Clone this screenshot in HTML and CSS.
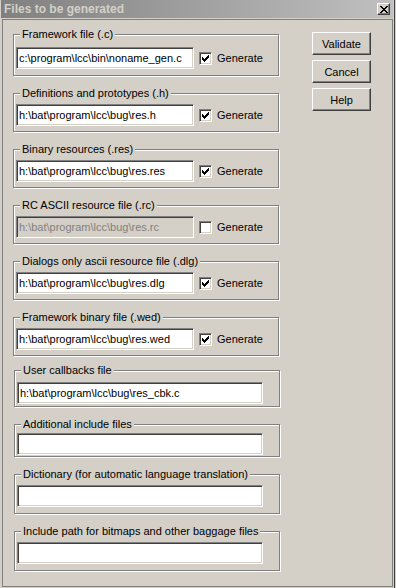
FILE: index.html
```html
<!DOCTYPE html>
<html lang="en">
<head>
  <meta charset="UTF-8" />
  <title>Files to be generated</title>
  <link rel="stylesheet" href="styles.css">
</head>
<body>
  <div class="window">
    <div class="titlebar">
      <span class="title">Files to be generated</span>
      <span class="close">
        <svg width="8" height="7" viewBox="0 0 8 7" shape-rendering="crispEdges">
          <path d="M0 0h2v1h1v1h2v-1h1v-1h2v1h-1v1h-1v1h-1v1h1v1h1v1h1v1h-2v-1h-1v-1h-2v1h-1v1h-2v-1h1v-1h1v-1h1v-1h-1v-1h-1v-1h-1z" fill="#000"/>
        </svg>
      </span>
    </div>

    <div class="client">
      <div class="groups">
        <fieldset class="group first">
          <legend>Framework file (.c)</legend>
          <div class="row">
            <input class="path" type="text" value="c:\program\lcc\bin\noname_gen.c" />
            <span class="check on"><svg width="7" height="7" viewBox="0 0 7 7" shape-rendering="crispEdges"><path d="M0 2h1v1h1v1h1v-1h1v-1h1v-1h1v-1h1v3h-1v1h-1v1h-1v1h-1v1h-1v-1h-1v-1h-1z"/></svg></span>
            <span class="check-label">Generate</span>
          </div>
        </fieldset>

        <fieldset class="group">
          <legend>Definitions and prototypes (.h)</legend>
          <div class="row">
            <input class="path" type="text" value="h:\bat\program\lcc\bug\res.h" />
            <span class="check on"><svg width="7" height="7" viewBox="0 0 7 7" shape-rendering="crispEdges"><path d="M0 2h1v1h1v1h1v-1h1v-1h1v-1h1v-1h1v3h-1v1h-1v1h-1v1h-1v1h-1v-1h-1v-1h-1z"/></svg></span>
            <span class="check-label">Generate</span>
          </div>
        </fieldset>

        <fieldset class="group">
          <legend>Binary resources (.res)</legend>
          <div class="row">
            <input class="path" type="text" value="h:\bat\program\lcc\bug\res.res" />
            <span class="check on"><svg width="7" height="7" viewBox="0 0 7 7" shape-rendering="crispEdges"><path d="M0 2h1v1h1v1h1v-1h1v-1h1v-1h1v-1h1v3h-1v1h-1v1h-1v1h-1v1h-1v-1h-1v-1h-1z"/></svg></span>
            <span class="check-label">Generate</span>
          </div>
        </fieldset>

        <fieldset class="group">
          <legend>RC ASCII resource file (.rc)</legend>
          <div class="row">
            <input class="path" type="text" value="h:\bat\program\lcc\bug\res.rc" disabled />
            <span class="check"></span>
            <span class="check-label">Generate</span>
          </div>
        </fieldset>

        <fieldset class="group">
          <legend>Dialogs only ascii resource file (.dlg)</legend>
          <div class="row">
            <input class="path" type="text" value="h:\bat\program\lcc\bug\res.dlg" />
            <span class="check on"><svg width="7" height="7" viewBox="0 0 7 7" shape-rendering="crispEdges"><path d="M0 2h1v1h1v1h1v-1h1v-1h1v-1h1v-1h1v3h-1v1h-1v1h-1v1h-1v1h-1v-1h-1v-1h-1z"/></svg></span>
            <span class="check-label">Generate</span>
          </div>
        </fieldset>

        <fieldset class="group">
          <legend>Framework binary file (.wed)</legend>
          <div class="row">
            <input class="path" type="text" value="h:\bat\program\lcc\bug\res.wed" />
            <span class="check on"><svg width="7" height="7" viewBox="0 0 7 7" shape-rendering="crispEdges"><path d="M0 2h1v1h1v1h1v-1h1v-1h1v-1h1v-1h1v3h-1v1h-1v1h-1v1h-1v1h-1v-1h-1v-1h-1z"/></svg></span>
            <span class="check-label">Generate</span>
          </div>
        </fieldset>

        <fieldset class="group wide callbacks">
          <legend>User callbacks file</legend>
          <input class="path long" type="text" value="h:\bat\program\lcc\bug\res_cbk.c" />
        </fieldset>

        <fieldset class="group wide includes">
          <legend>Additional include files</legend>
          <input class="path long" type="text" value="" />
        </fieldset>

        <fieldset class="group wide">
          <legend>Dictionary (for automatic language translation)</legend>
          <input class="path long" type="text" value="" />
        </fieldset>

        <fieldset class="group wide">
          <legend>Include path for bitmaps and other baggage files</legend>
          <input class="path long" type="text" value="" />
        </fieldset>
      </div>

      <div class="buttons">
        <button type="button">Validate</button>
        <button type="button">Cancel</button>
        <button type="button">Help</button>
      </div>
    </div>
  </div>
</body>
</html>
```

FILE: styles.css
```css
body {
  margin: 0;
  background: #d4d0c8;
  font-family: "Liberation Sans", Arial, sans-serif;
  font-size: 11px;
  color: #000;
}

.window {
  width: 395px;
  height: 588px;
  box-sizing: border-box;
  display: flex;
  flex-direction: column;
  background: #d4d0c8;
  padding: 0 1px 1px 1px;
  border-right: 1px solid #404040;
}

.titlebar {
  height: 18px;
  display: flex;
  align-items: center;
  justify-content: space-between;
  padding: 0 3px 0 3px;
  background: linear-gradient(to right, #808080, #c0c0c0);
}

.title {
  font-size: 12px;
  font-weight: bold;
  color: #d4d0c8;
}

.close {
  width: 13px;
  height: 12px;
  box-sizing: border-box;
  display: flex;
  align-items: center;
  justify-content: center;
  background: #d4d0c8;
  border: 1px solid;
  border-color: #fff #404040 #404040 #fff;
  box-shadow: inset -1px -1px 0 #808080;
}

.client {
  flex: 1;
  display: flex;
  margin: 1px 0 0 1px;
  padding: 8px 0 0 10px;
  border: 1px solid #808080;
}

.groups {
  width: 268px;
  display: flex;
  flex-direction: column;
  gap: 11px;
}

.group {
  margin: 0;
  min-inline-size: 0;
  width: 266px;
  box-sizing: border-box;
  padding: 4px 2px 5px 2px;
  border: 1px solid #808080;
  box-shadow: inset 1px 1px 0 #fff, 1px 1px 0 #fff;
}

.group legend {
  margin-left: 4px;
  padding: 0 2px;
  line-height: 13px;
  background: #d4d0c8;
}

.group.first {
  padding-top: 6px;
  padding-bottom: 6px;
}

.group.wide {
  margin-left: 1px;
  padding-bottom: 6px;
}

.group.callbacks {
  margin-top: -3px;
  padding-top: 5px;
  padding-bottom: 2px;
}

.group.includes {
  padding-top: 2px;
  padding-bottom: 1px;
}

.row {
  display: flex;
  align-items: center;
}

.path {
  width: 178px;
  height: 22px;
  box-sizing: border-box;
  margin: 0;
  padding: 0 2px;
  font-family: inherit;
  font-size: 11px;
  color: #000;
  background: #fff;
  border: 1px solid;
  border-color: #808080 #fff #fff #808080;
  box-shadow: inset 1px 1px 0 #404040, inset -1px -1px 0 #d4d0c8;
  outline: none;
}

.path.long {
  width: 246px;
}

.path:disabled {
  color: #808080;
  background: #d4d0c8;
}

.check {
  width: 13px;
  height: 13px;
  box-sizing: border-box;
  margin-left: 5px;
  background: #fff;
  border: 1px solid;
  border-color: #808080 #fff #fff #808080;
  box-shadow: inset 1px 1px 0 #404040, inset -1px -1px 0 #d4d0c8;
}

.check svg {
  display: block;
  margin: 2px;
}

.check-label {
  margin-left: 5px;
}

.buttons {
  display: flex;
  flex-direction: column;
  gap: 5px;
  margin: 4px 0 0 31px;
}

.buttons button {
  width: 59px;
  height: 23px;
  padding: 0;
  font-family: inherit;
  font-size: 11px;
  color: #000;
  background: #d4d0c8;
  border: 1px solid;
  border-color: #fff #404040 #404040 #fff;
  box-shadow: inset -1px -1px 0 #808080;
}
```
